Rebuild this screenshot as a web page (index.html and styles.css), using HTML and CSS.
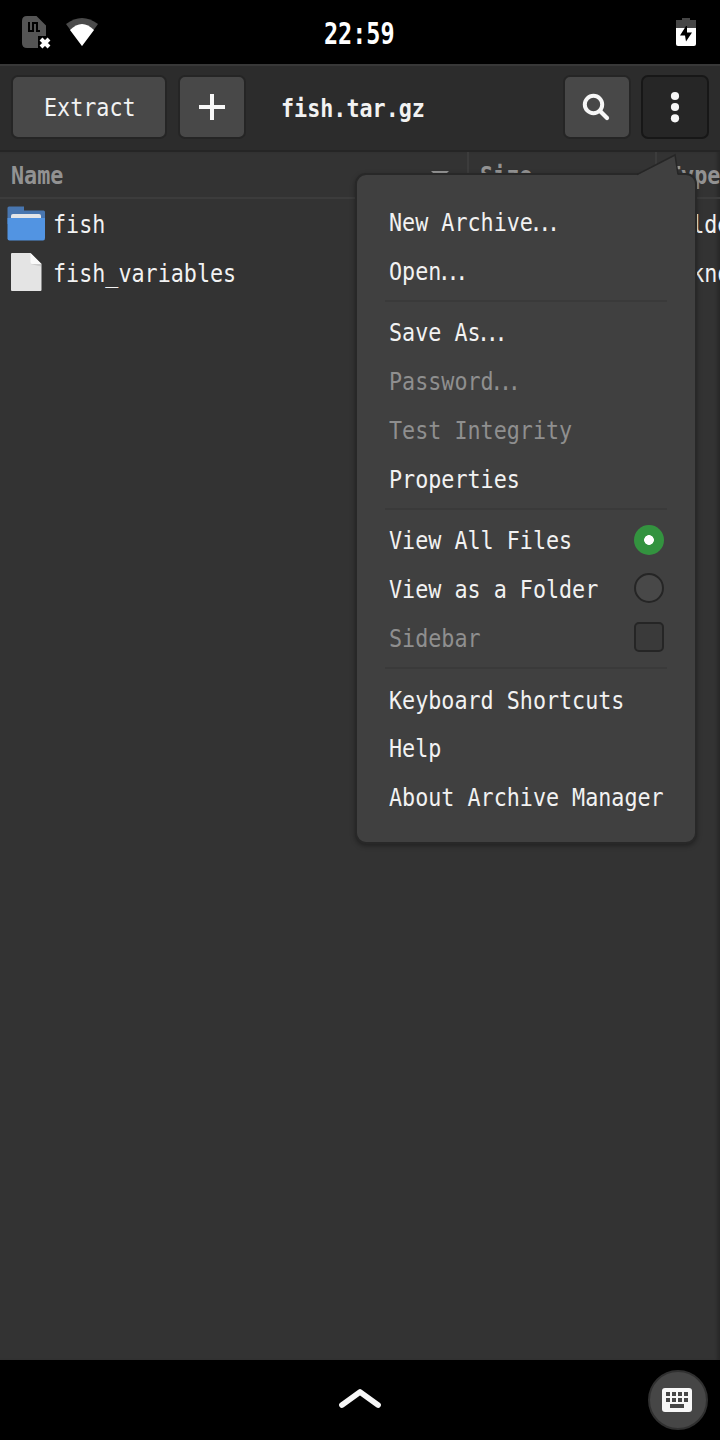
FILE: index.html
```html
<!DOCTYPE html>
<html lang="en">
<head>
<meta charset="utf-8">
<title>fish.tar.gz</title>
<link rel="stylesheet" href="styles.css">
</head>
<body>
<div class="phone">
  <header class="status">
    <div class="status-left">
      <svg width="30" height="34" viewBox="0 0 30 34"><path d="M5 1h9.500l9.500 9.500V21h-8v12H5q-5 0-5-5V6q0-5 5-5z" fill="#555"/><path d="M7 7v9h4V8h4v8h3" fill="none" stroke="#000" stroke-width="2"/><path d="M19 24l8 8M27 24l-8 8" stroke="#fff" stroke-width="4"/></svg>
      <svg width="32" height="28" viewBox="0 0 32 28"><path d="M0 6Q16-6 32 6L16 28z" fill="#4a4a4a"/><path d="M4 12Q16 0 28 12L16 28z" fill="#fff"/></svg>
    </div>
    <div class="clock"><span>22:59</span></div>
    <svg class="battery" width="20" height="28" viewBox="0 0 20 28"><path d="M0 2h6V0h8v2h6v9H0z" fill="#464646"/><path d="M0 10h20v16q0 2-2 2H2q-2 0-2-2z" fill="#fff"/><path d="M10 8L4 17.500h5L10 23.500 16 14.500h-5V8z" fill="#000"/></svg>
  </header>

  <section class="toolbar">
    <button class="btn extract"><span class="t">Extract</span></button>
    <button class="btn add"><svg width="28" height="28" viewBox="0 0 28 28"><path d="M14 1v26M1 14h26" stroke="#f7f7f7" stroke-width="4"/></svg></button>
    <h1 class="title"><span class="t bold">fish.tar.gz</span></h1>
    <button class="btn search"><svg width="28" height="28" viewBox="0 0 28 28"><circle cx="11.500" cy="11.500" r="8.700" fill="none" stroke="#f7f7f7" stroke-width="4"/><path d="M18 18l7 7" stroke="#f7f7f7" stroke-width="4.200" stroke-linecap="round"/></svg></button>
    <button class="btn more"><svg width="10" height="32" viewBox="0 0 10 32"><g fill="#f7f7f7"><circle cx="5" cy="5" r="4.100"/><circle cx="5" cy="16" r="4.100"/><circle cx="5" cy="27.300" r="4.100"/></g></svg></button>
  </section>

  <main class="content">
    <div class="cols">
      <div class="col name"><span class="t bold">Name</span><svg width="18" height="10" viewBox="0 0 18 10"><path d="M0 0h18L9 9z" fill="#929292"/></svg></div>
      <div class="col size"><span class="t bold">Size</span></div>
      <div class="col type"><span class="t bold">Type</span></div>
    </div>
    <div class="file">
      <svg width="40" height="40" viewBox="0 0 40 40"><path d="M1.500 3q0-1.500 1.500-1.500h15v4h19.500q1.500 0 1.500 1.500v12H1.500z" fill="#4876b0"/><path d="M5 15v-4q0-2 2-2h26q2 0 2 2v4z" fill="#e3e5e8"/><path d="M1.500 13h37.500v20q0 2.500-2 2.500H3.500q-2 0-2-2z" fill="#5294e2"/></svg>
      <span class="t">fish</span><span class="t kind">Folder</span>
    </div>
    <div class="file">
      <svg width="40" height="40" viewBox="0 0 40 40"><path d="M6 0h18.500L35.500 11v26q0 1-1 1H6q-1 0-1-1V1q0-1 1-1z" fill="#e4e4e4"/><path d="M24.500 11H35v2.500z" fill="#ccc"/><path d="M24.500 0L35.500 11h-9q-2 0-2-2z" fill="#fafafa"/></svg>
      <span class="t">fish_variables</span><span class="t kind">Unknown</span>
    </div>
  </main>

  <nav class="menu">
    <svg class="pointer" width="44" height="24" viewBox="0 0 44 24"><path d="M0 24v-2L38 2l3 20v2z" fill="#404040"/><path d="M0 21.500L38 2l3 19.500" fill="none" stroke="#262626" stroke-width="1.500"/></svg>
    <div class="item"><span class="t">New Archive<i>...</i></span></div>
    <div class="item"><span class="t">Open<i>...</i></span></div>
    <hr>
    <div class="item"><span class="t">Save As<i>...</i></span></div>
    <div class="item off"><span class="t">Password<i>...</i></span></div>
    <div class="item off"><span class="t">Test Integrity</span></div>
    <div class="item"><span class="t">Properties</span></div>
    <hr>
    <div class="item"><span class="t">View All Files</span><b class="mark radio on"></b></div>
    <div class="item"><span class="t">View as a Folder</span><b class="mark radio"></b></div>
    <div class="item off"><span class="t">Sidebar</span><b class="mark check"></b></div>
    <hr>
    <div class="item"><span class="t">Keyboard Shortcuts</span></div>
    <div class="item"><span class="t">Help</span></div>
    <div class="item"><span class="t">About Archive Manager</span></div>
  </nav>

  <footer class="bottom">
    <svg width="44" height="24" viewBox="0 0 44 24"><path d="M4 19L22 6l18 13" fill="none" stroke="#f7f7f7" stroke-width="5.800" stroke-linecap="round" stroke-linejoin="round"/></svg>
    <button class="keyboard"><svg width="30" height="24" viewBox="0 0 30 24"><rect width="30" height="24" rx="3" fill="#f7f7f7"/><path d="M4 6h22M4 12h22" stroke="#464646" stroke-width="4" stroke-dasharray="4 2"/><path d="M8 18h14" stroke="#464646" stroke-width="4"/></svg></button>
  </footer>
</div>
</body>
</html>
```

FILE: styles.css
```css
* { box-sizing: border-box; }
body { margin: 0; background: #000; }
svg { display: block; flex: none; }
button { padding: 0; font: inherit; color: inherit; }
.phone {
  position: relative;
  width: 720px;
  height: 1440px;
  overflow: hidden;
  display: flex;
  flex-direction: column;
  font: 25px/30px "DejaVu Sans Mono", monospace;
  color: #f2f2f2;
}

/* condensed monospace label */
.t {
  display: inline-block;
  white-space: pre;
  transform: scaleX(.869);
  transform-origin: 0 50%;
}
.bold { font-weight: bold; }
.t i { font-style: normal; letter-spacing: -5px; margin-left: -4px; }

.status {
  height: 64px;
  flex: none;
  display: grid;
  grid-template-columns: 1fr 70px 1fr;
  align-items: center;
  padding: 0 24px 0 22px;
}
.status-left { display: flex; gap: 14px; align-items: center; }
.clock { font-size: 30px; font-weight: bold; padding-top: 3px; color: #fff; }
.clock span { display: inline-block; transform: scaleX(.782); transform-origin: 0 50%; }
.battery { justify-self: end; }

.toolbar {
  height: 88px;
  flex: none;
  display: flex;
  align-items: center;
  padding: 0 11px 2px;
  background: #2c2c2c;
  border-top: 2px solid #383838;
  border-bottom: 2px solid #252525;
}
.btn {
  height: 64px;
  width: 68px;
  border: 2px solid #252525;
  border-radius: 7px;
  background: #484848;
  display: flex;
  align-items: center;
  justify-content: center;
}
.extract { width: 156px; justify-content: flex-start; padding: 2px 0 0 31px; }
.add { margin-left: 11px; }
.title { margin: 0 auto 0 35px; padding-top: 3px; font-size: 25px; width: 165px; }
.search { margin-right: 10px; }
.search svg { margin-right: 2px; }
.more { background: #262626; border-color: #171717; }

.content {
  flex: 1;
  background: #333;
  overflow: hidden;
  box-shadow: inset -4px 0 3px -1px #292929;
}
.cols {
  height: 47px;
  display: flex;
  color: #929292;
  border-bottom: 2px solid #3c3c3c;
}
.col {
  flex: none;
  display: flex;
  align-items: center;
  justify-content: space-between;
  padding: 2px 18px 0 11px;
  border-right: 2px solid #3c3c3c;
}
.name { width: 469px; }
.size { width: 188px; }
.type { width: 120px; }
.file { height: 48.800px; display: flex; align-items: center; padding: 3px 0 0 6px; position: relative; }
.file svg { margin-right: 7px; }
.file:nth-child(2) svg { margin-top: 1px; }
.file:nth-child(3) svg { margin-top: -1px; }
.kind { position: absolute; left: 665px; }

.menu {
  position: absolute;
  left: 355px;
  top: 173px;
  width: 342px;
  height: 671px;
  padding: 23.500px 28px;
  background: #404040;
  border: 2px solid #282828;
  border-radius: 11px;
  box-shadow: 0 2px 5px rgba(0, 0, 0, .35);
}
.pointer { position: absolute; left: 280px; top: -22px; }
.item {
  height: 48.750px;
  display: flex;
  align-items: center;
  padding: 0 3px 0 3.500px;
  position: relative;
}
.off { color: #8f8f8f; }
.menu hr { height: 2px; margin: 4px -1px 7px 0; margin-right: 0; border: 0; background: #3a3a3a; }
.mark { position: absolute; right: 3px; top: 7.500px; width: 30px; height: 30px; border: 2px solid #252525; background: #484848; }
.radio { border-radius: 50%; }
.radio.on { border: 0; background: radial-gradient(circle, #fff 4.500px, #33933f 5.200px); }
.check { border-radius: 5px; background: #3a3a3a; }

.bottom {
  height: 80px;
  flex: none;
  display: grid;
  grid-template-columns: 1fr 44px 1fr;
  align-items: center;
}
.bottom > svg { grid-column: 2; margin-top: -4px; }
.keyboard {
  justify-self: end;
  width: 60px;
  height: 60px;
  margin-right: 12px;
  padding-right: 2px;
  border: 2px solid #303030;
  border-radius: 50%;
  background: #464646;
  display: flex;
  align-items: center;
  justify-content: center;
}
```
